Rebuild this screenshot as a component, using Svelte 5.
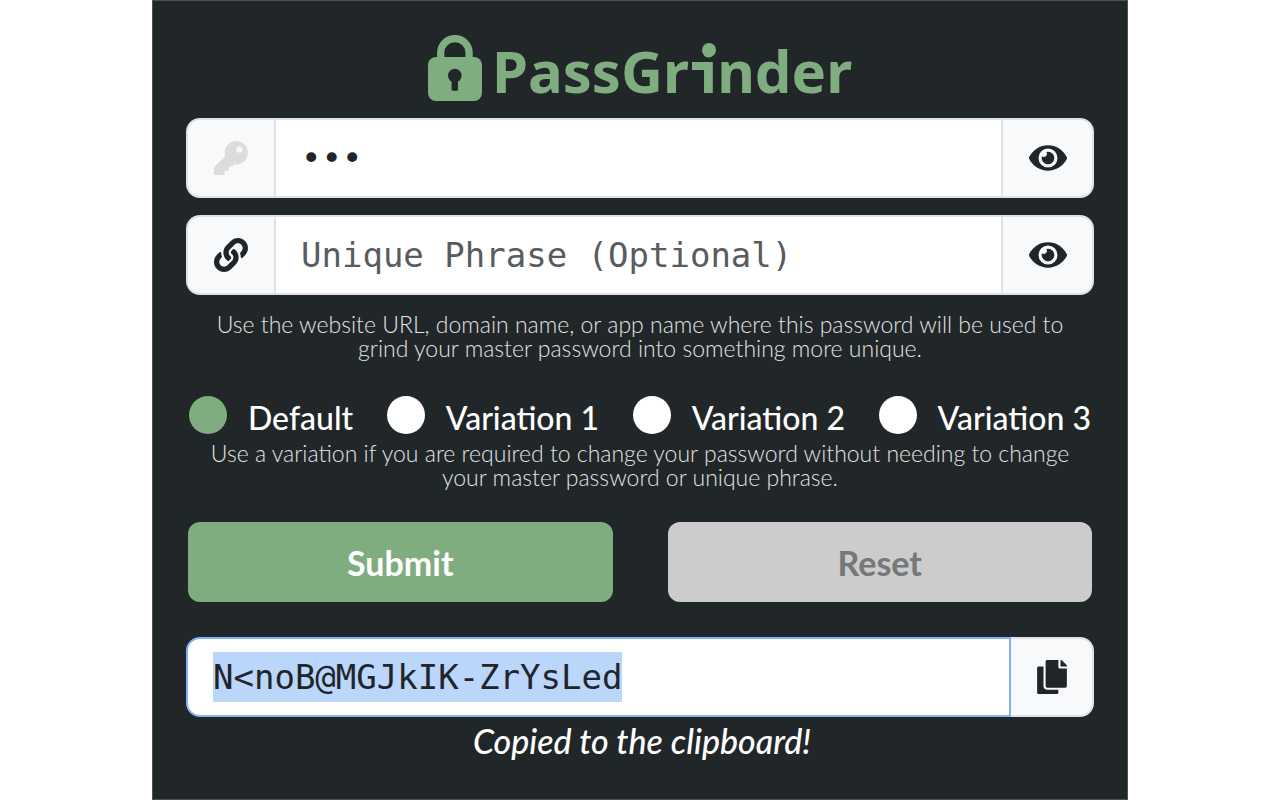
<script>
  import { onMount } from 'svelte';

  const variations = ['Default', 'Variation 1', 'Variation 2', 'Variation 3'];

  let master = $state('abc');
  let phrase = $state('');
  let variation = $state('Default');
  let showMaster = $state(false);
  let showPhrase = $state(true);
  let output = $state('N<noB@MGJkIK-ZrYsLed');
  let outputField;

  onMount(() => {
    outputField.focus();
    outputField.select();
  });
</script>

{#snippet eye()}
  <svg class="icon wide" viewBox="0 0 576 512" aria-hidden="true">
    <path d="M572.52 241.4C518.29 135.59 410.93 64 288 64S57.68 135.64 3.48 241.41a32.35 32.35 0 0 0 0 29.19C57.71 376.41 165.07 448 288 448s230.32-71.64 284.52-177.41a32.35 32.35 0 0 0 0-29.19zM288 400a144 144 0 1 1 144-144 143.93 143.93 0 0 1-144 144zm0-240a95.31 95.31 0 0 0-25.31 3.79 47.85 47.85 0 0 1-66.9 66.9A95.78 95.78 0 1 0 288 160z" />
  </svg>
{/snippet}

<main class="panel">
  <h1 class="logo">
    <svg class="lock" viewBox="0 0 54 66" aria-hidden="true">
      <path d="M12.7 24V17.8a14.2 14.2 0 0 1 28.4 0V24" fill="none" stroke="#7fad7f" stroke-width="7.3" />
      <rect y="22" width="54" height="44" rx="8" fill="#7fad7f" />
      <circle cx="26.8" cy="40.6" r="6.8" fill="#212629" />
      <rect x="23.6" y="43" width="6.4" height="12.8" rx="1.6" fill="#212629" />
    </svg>
    <span class="wordmark">PassGr<span class="slab">i</span>nder</span>
  </h1>

  <form onsubmit={(e) => e.preventDefault()}>
    <div class="group">
      <label class="addon" for="master" aria-label="Master password">
        <svg class="icon muted" viewBox="0 0 512 512" aria-hidden="true">
          <path d="M512 176.001C512 273.203 433.202 352 336 352c-11.22 0-22.19-1.062-32.827-3.069l-24.012 27.014A23.999 23.999 0 0 1 261.223 384H224v40c0 13.255-10.745 24-24 24h-40v40c0 13.255-10.745 24-24 24H24c-13.255 0-24-10.745-24-24v-78.059c0-6.365 2.529-12.47 7.029-16.971l161.802-161.802C163.108 213.814 160 195.271 160 176 160 78.798 238.797.001 335.999 0 433.488-.001 512 78.511 512 176.001zM336 128c0 26.51 21.49 48 48 48s48-21.49 48-48-21.49-48-48-48-48 21.49-48 48z" />
        </svg>
      </label>
      <input id="master" type={showMaster ? 'text' : 'password'} bind:value={master} />
      <button class="addon end" type="button" aria-label="Toggle master password" onclick={() => (showMaster = !showMaster)}>
        {@render eye()}
      </button>
    </div>

    <div class="group">
      <label class="addon" for="phrase" aria-label="Unique phrase">
        <svg class="icon" viewBox="0 0 512 512" aria-hidden="true">
          <path d="M326.612 185.391c59.747 59.809 58.927 155.698.36 214.59-.11.12-.24.25-.36.37l-67.2 67.2c-59.27 59.27-155.699 59.262-214.96 0-59.27-59.26-59.27-155.7 0-214.96l37.106-37.106c9.84-9.84 26.786-3.3 27.294 10.606.648 17.722 3.826 35.527 9.69 52.721 1.986 5.822.567 12.262-3.783 16.612l-13.087 13.087c-28.026 28.026-28.905 73.66-1.155 101.96 28.024 28.579 74.086 28.749 102.325.51l67.2-67.19c28.191-28.191 28.073-73.757 0-101.83-3.701-3.694-7.429-6.564-10.341-8.569a16.037 16.037 0 0 1-6.947-12.606c-.396-10.567 3.348-21.456 11.698-29.806l21.054-21.055c5.521-5.521 14.182-6.199 20.584-1.731a152.482 152.482 0 0 1 20.522 17.197zM467.547 44.449c-59.261-59.262-155.69-59.27-214.96 0l-67.2 67.2c-.12.12-.25.25-.36.37-58.566 58.892-59.387 154.781.36 214.59a152.454 152.454 0 0 0 20.521 17.196c6.402 4.468 15.064 3.789 20.584-1.731l21.054-21.055c8.35-8.35 12.094-19.239 11.698-29.806a16.037 16.037 0 0 0-6.947-12.606c-2.912-2.005-6.64-4.875-10.341-8.569-28.073-28.073-28.191-73.639 0-101.83l67.2-67.19c28.239-28.239 74.3-28.069 102.325.51 27.75 28.3 26.872 73.934-1.155 101.96l-13.087 13.087c-4.35 4.35-5.769 10.79-3.783 16.612 5.864 17.194 9.042 34.999 9.69 52.721.509 13.906 17.454 20.446 27.294 10.606l37.106-37.106c59.271-59.259 59.271-155.699.001-214.959z" />
        </svg>
      </label>
      <input id="phrase" type={showPhrase ? 'text' : 'password'} placeholder="Unique Phrase (Optional)" bind:value={phrase} />
      <button class="addon end" type="button" aria-label="Toggle unique phrase" onclick={() => (showPhrase = !showPhrase)}>
        {@render eye()}
      </button>
    </div>
    <p class="help">
      Use the website URL, domain name, or app name where this password will be used to grind your master password into something more unique.
    </p>

    <div class="variations">
      {#each variations as name}
        <label class="choice">
          <input type="radio" name="variation" value={name} bind:group={variation} />
          <span>{name}</span>
        </label>
      {/each}
    </div>
    <p class="help">
      Use a variation if you are required to change your password without needing to change your master password or unique phrase.
    </p>

    <div class="actions">
      <button class="btn submit" type="submit">Submit</button>
      <button class="btn reset" type="button">Reset</button>
    </div>

    <div class="group result">
      <input class="output" type="text" readonly aria-label="Generated password" value={output} bind:this={outputField} />
      <button class="addon copy" type="button" aria-label="Copy to clipboard">
        <svg class="icon narrow" viewBox="0 0 448 512" aria-hidden="true">
          <path d="M320 448v40c0 13.255-10.745 24-24 24H24c-13.255 0-24-10.745-24-24V120c0-13.255 10.745-24 24-24h72v296c0 30.879 25.121 56 56 56h168zm0-344V0H152c-13.255 0-24 10.745-24 24v368c0 13.255 10.745 24 24 24h272c13.255 0 24-10.745 24-24V128H344c-13.2 0-24-10.8-24-24zm120.971-31.029L375.029 7.029A24 24 0 0 0 358.059 0H352v96h96v-6.059a24 24 0 0 0-7.029-16.97z" />
        </svg>
      </button>
    </div>
    <p class="status" role="status">Copied to the clipboard!</p>
  </form>
</main>

<style>
  :global(body) {
    background: #fff;
  }

  .panel {
    box-sizing: border-box;
    max-width: 976px;
    min-height: 100vh;
    margin: 0 auto;
    padding: 34px 33px 32px;
    border: 1px solid #4d524f;
    background: #212629;
    color: #fff;
    font-family: Lato, sans-serif;
  }

  .logo {
    display: flex;
    justify-content: center;
    gap: 10px;
    margin: 0 0 17px;
  }

  .lock {
    width: 54px;
    height: 66px;
  }

  .wordmark {
    height: 66px;
    color: #7fad7f;
    font: 700 58px/72px "Noto Sans", sans-serif;
  }

  .slab {
    position: relative;
    margin-left: 11px;
  }

  .slab::before {
    content: "";
    position: absolute;
    left: -8px;
    bottom: 40px;
    width: 14px;
    height: 8px;
    background: #7fad7f;
  }

  .slab::after {
    content: "";
    position: absolute;
    left: 2px;
    bottom: 53px;
    width: 14px;
    height: 14px;
    border-radius: 50%;
    background: #7fad7f;
  }

  .group {
    display: flex;
    height: 80px;
    margin-bottom: 17px;
    border-radius: 14px;
  }

  .addon {
    box-sizing: border-box;
    display: flex;
    flex: none;
    align-items: center;
    justify-content: center;
    width: 88px;
    margin: 0;
    padding: 0;
    border: 2px solid #dee2e6;
    border-right: 0;
    border-radius: 14px 0 0 14px;
    background: #f8f9fa;
    color: #212529;
  }

  .addon.end,
  .addon.copy {
    width: 93px;
    border-right: 2px solid #dee2e6;
    border-radius: 0 14px 14px 0;
  }

  .addon.copy {
    width: 83px;
    border-left: 0;
  }

  .icon {
    width: 34px;
    height: 34px;
    fill: currentColor;
  }

  .icon.wide {
    width: 38px;
  }

  .icon.narrow {
    width: 30px;
  }

  .icon.muted {
    fill: #dcdcdc;
  }

  .group input {
    box-sizing: border-box;
    flex: 1;
    min-width: 0;
    margin: 0;
    padding: 0 25px;
    border: solid #dee2e6;
    border-width: 2px 0 2px 2px;
    border-radius: 0;
    outline: 0;
    background: #fff;
    color: #212529;
    font: 34px/50px "DejaVu Sans Mono", monospace;
  }

  .group input::placeholder {
    color: #595c5f;
    opacity: 1;
  }

  .group .output {
    border: 2px solid #86b0f4;
    border-radius: 14px 0 0 14px;
  }

  .output::selection {
    background: #bad6fb;
    color: #212529;
  }

  .help {
    margin: 0;
    padding: 0 20px;
    color: #e2e3e3;
    font-size: 23px;
    font-weight: 300;
    line-height: 24px;
    text-align: center;
  }

  .variations {
    display: flex;
    flex-wrap: wrap;
    justify-content: space-between;
    margin: 36px 3px 5px;
  }

  .choice {
    display: flex;
    align-items: flex-start;
    gap: 21px;
    height: 40px;
    font-size: 32px;
    font-weight: 500;
    line-height: 44px;
  }

  .choice input {
    appearance: none;
    flex: none;
    width: 38px;
    height: 38px;
    margin: 0;
    border-radius: 50%;
    background: #fff;
  }

  .choice input:checked {
    background: #7fad7f;
  }

  .actions {
    display: grid;
    grid-template-columns: 1fr 1fr;
    gap: 55px;
    margin: 33px 2px 35px;
  }

  .btn {
    height: 80px;
    padding: 2px 0 0;
    border: 0;
    border-radius: 12px;
    background: #7fad7f;
    color: #fff;
    font: 700 34px/50px Lato, sans-serif;
  }

  .reset {
    background: #ccc;
    color: #747878;
  }

  .result {
    margin-bottom: 4px;
  }

  .status {
    margin: 0;
    padding-left: 4px;
    font-size: 34px;
    font-style: italic;
    font-weight: 500;
    line-height: 40px;
    text-align: center;
  }
</style>
